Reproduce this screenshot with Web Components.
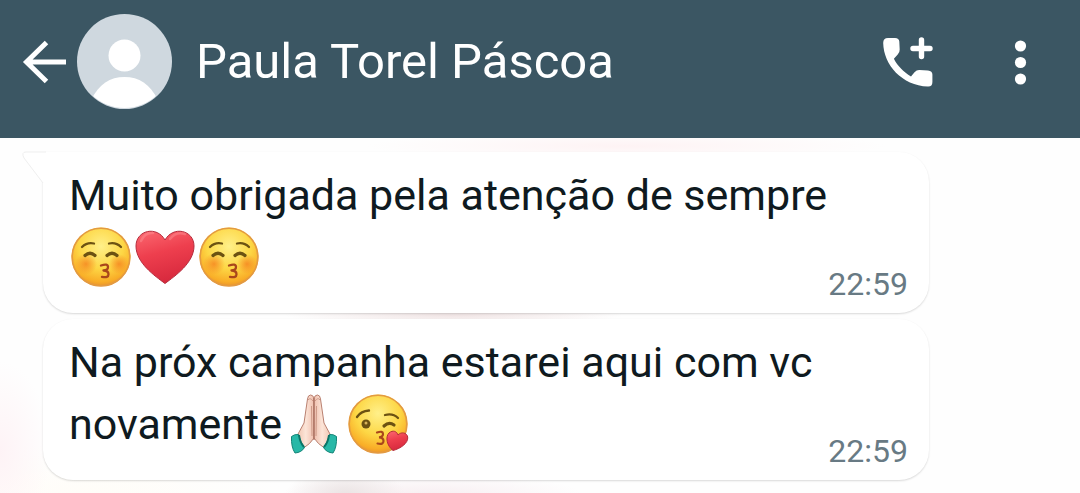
<!DOCTYPE html>
<html lang="pt-BR">
<head>
<meta charset="utf-8">
<meta name="viewport" content="width=device-width, initial-scale=1">
<title>Paula Torel Páscoa</title>
<style>
html, body { margin: 0; min-height: 100%; }
body { font-family: Roboto, "Noto Sans", sans-serif; background: #fff; }
</style>
</head>
<body>
<chat-screen>
  <chat-header slot="header">Paula Torel Páscoa</chat-header>
  <chat-message time="22:59" tail>Muito obrigada pela atenção de sempre <span style="white-space:nowrap"><chat-emoji name="smooch"></chat-emoji><chat-emoji name="heart"></chat-emoji><chat-emoji name="smooch"></chat-emoji></span></chat-message>
  <chat-message time="22:59">Na próx campanha estarei aqui com vc novamente<chat-emoji name="pray"></chat-emoji><chat-emoji name="wink"></chat-emoji></chat-message>
</chat-screen>
<script>
const attach = (el, html) => {
  const t = document.createElement('template');
  t.innerHTML = html;
  el.attachShadow({ mode: 'open' }).append(t.content.cloneNode(true));
};

customElements.define('chat-screen', class extends HTMLElement {
  constructor() {
    super();
    attach(this, `
      <style>
        :host { display: flex; flex-direction: column; min-height: 100vh; }
        main {
          flex: 1; display: flex; flex-direction: column; align-items: flex-start;
          gap: 6px; padding: 14px 43px;
          background:
            radial-gradient(ellipse 260px 14px at 58% 8px, #fef3f4, #fef3f400),
            radial-gradient(ellipse 170px 10px at 42% 177px, #f0e4e4, #f0e4e400),
            radial-gradient(ellipse 60px 26px at 32% 100%, #ebe4e4, #ebe4e400),
            radial-gradient(ellipse 150px 20px at 40% 100%, #f8eff2, #f8eff200),
            radial-gradient(ellipse 50px 90px at 0 88%, #fef3f6, #fef3f600),
            radial-gradient(ellipse 200px 50px at 8% 100%, #fffdf8, #fffdf800),
            #fefefe;
        }
      </style>
      <slot name="header"></slot>
      <main><slot></slot></main>`);
  }
});

customElements.define('chat-header', class extends HTMLElement {
  constructor() {
    super();
    attach(this, `
      <style>
        :host { display: block; background: #3b5663; color: #fff; }
        header { display: flex; align-items: center; padding: 14px 45px 29px 20px; }
        button { border: 0; padding: 0; background: none; color: inherit; display: flex; }
        svg { display: block; }
        .avatar { margin-left: 9px; }
        h1 { flex: 1; margin: 0 0 0 24px; font-size: 49px; line-height: 60px; font-weight: 400; white-space: nowrap; }
        .more { margin-left: 68px; }
      </style>
      <header>
        <button type="button" aria-label="Voltar">
          <svg width="48" height="48" viewBox="0 0 48 48" fill="none" stroke="currentColor" stroke-width="5"><path d="M46 24H7M26.500 4.500L6.500 24l20 19.500"/></svg>
        </button>
        <svg class="avatar" width="95" height="95" viewBox="0 0 95 95" role="img" aria-label="Foto do contato">
          <clipPath id="c"><circle cx="47.500" cy="47.500" r="46.500"/></clipPath>
          <circle cx="47.500" cy="47.500" r="47.500" fill="#cfd8df"/>
          <g fill="#fff" clip-path="url(#c)"><circle cx="47.500" cy="41.500" r="16"/><path d="M14 96V86C22 70 33 63 47.500 63S73 70 81 86v10z"/></g>
        </svg>
        <h1><slot></slot></h1>
        <button type="button" aria-label="Ligar">
          <svg width="50" height="50" viewBox="0 0 50 50" fill="currentColor">
            <path d="M5 1h7q4 0 4.300 3.500l.4 8q.1 3-2 5l-3.800 4.300C14.500 29 20.500 35 28 39.500l3.500-4.300q2.200-2.400 5-2.200l8.500.6q4.400.4 4.400 4V45q0 4.800-4.500 4.600C19 48.500.6 28 .2 6Q.2 1 5 1z"/>
            <path d="M38.500 3v16.500M30 11.500h17" stroke="currentColor" stroke-width="5.400" stroke-linecap="round"/>
          </svg>
        </button>
        <button type="button" class="more" aria-label="Mais opções">
          <svg width="34" height="46" viewBox="0 0 34 46" fill="currentColor"><circle cx="19.500" cy="7" r="5.600"/><circle cx="19.500" cy="23.500" r="5.600"/><circle cx="19.500" cy="40" r="5.600"/></svg>
        </button>
      </header>`);
  }
});

customElements.define('chat-message', class extends HTMLElement {
  constructor() {
    super();
    attach(this, `
      <style>
        :host { display: block; width: 100%; max-width: 886px; }
        article {
          position: relative; display: grid; box-sizing: border-box; padding: 12px 21px 13px 26px;
          border-radius: 30px; background: #fff; box-shadow: 0 1px 2px #00000026;
        }
        :host([tail]) article { border-top-left-radius: 0; }
        .tail { display: none; position: absolute; left: -21px; top: -1px; }
        :host([tail]) .tail { display: block; }
        p { grid-area: 1 / 1; margin: 0 0 12px; font-size: 43px; line-height: 62px; color: #0f1a20; }
        time { grid-area: 1 / 1; place-self: end; font-size: 32px; line-height: 32px; color: #687a84; }
      </style>
      <article>
        <svg class="tail" width="24" height="34" viewBox="0 0 24 34" aria-hidden="true"><path d="M24 1H4Q-1 1 2 7L21 32h3z" fill="#fff"/><path d="M24 1H4Q-1 1 2 7L21 32" fill="none" stroke="#efefef"/></svg>
        <p><slot></slot></p>
        <time></time>
      </article>`);
  }
  connectedCallback() {
    this.shadowRoot.querySelector('time').textContent = this.getAttribute('time');
  }
});

const face = `
  <radialGradient id="f" cx=".5" cy=".32" r=".68"><stop offset="0" stop-color="#fff08a"/><stop offset=".55" stop-color="#fdd745"/><stop offset=".88" stop-color="#f9ad27"/><stop offset="1" stop-color="#e8922f"/></radialGradient>
  <radialGradient id="b"><stop offset="0" stop-color="#f58220" stop-opacity=".8"/><stop offset="1" stop-color="#f58220" stop-opacity="0"/></radialGradient>
  <circle cx="32" cy="32" r="29.500" fill="url(#f)"/><circle cx="32" cy="32" r="28.800" fill="none" stroke="#e39a42" stroke-width="1.600"/>`;
const red = `<linearGradient id="h" x1=".3" y1="0" x2=".6" y2="1"><stop offset="0" stop-color="#f9626b"/><stop offset=".4" stop-color="#ee3f4e"/><stop offset="1" stop-color="#d5273c"/></linearGradient>`;
const halfPray = `<path d="M32 6Q31 3 28.500 3T25.500 7L22 31 15.500 43l6 13 6-4.500L32 46z" fill="url(#s)" stroke="#b98070"/>
    <path d="M26 8q2-3 5 1M29.500 14 30 44" fill="none" stroke="#ce9a88"/>
    <path d="M9.500 44.500q3-2.500 7-2 2 8 6 13-3 5-9.500 5.500Q9 55 9.500 44.500z" fill="#28b8a7" stroke="#148477"/><path d="M17 43q1 8 5 12" fill="none" stroke="#0b7467" stroke-width="2"/>`;
const emojis = {
  smooch: ['Rosto beijando com olhos fechados', face + `
    <circle cx="17" cy="39" r="11" fill="url(#b)"/><circle cx="50" cy="39" r="10" fill="url(#b)"/>
    <g fill="none" stroke="#6c5212" stroke-linecap="round"><path d="M13 22q5-5 12-3.500M40 18.500q7-1.500 12 3.500" stroke-width="2.300"/><path d="M16 30.500q5-4.500 10 0M38 30.500q5-4.500 10 0" stroke-width="3.200"/></g>
    <path d="M32 40.500q7-2.500 7 1.500 0 3.200-4.500 3.500 5 0 5 3.800 0 4-6.500 2.500" fill="none" stroke="#a9471b" stroke-width="2.300" stroke-linecap="round" stroke-linejoin="round"/>`],
  heart: ['Coração vermelho', red + `
    <path d="M32 58.500C22 51 3 38 3 21 3 5 24 .5 32 15 40 .5 61 5 61 21 61 38 42 51 32 58.500z" fill="url(#h)" stroke="#b52b3b"/>
    <path d="M8 16Q12 7 20 8M37 14Q43 6 52 9" fill="none" stroke="#ff9a9e" stroke-width="2.500" stroke-linecap="round" opacity=".4"/>`],
  pray: ['Mãos unidas', `
    <linearGradient id="s"><stop offset="0" stop-color="#f0c5b1"/><stop offset=".5" stop-color="#fce5d8"/><stop offset="1" stop-color="#efbfae"/></linearGradient>
    <g>${halfPray}</g><g transform="matrix(-1 0 0 1 64 0)">${halfPray}</g>
    <path d="M32 6v42" stroke="#a96f60" stroke-width="1.200"/>`],
  wink: ['Rosto mandando um beijo', face + red + `
    <g fill="none" stroke="#6c5212" stroke-linecap="round"><path d="M11 25q4-6 12-6.500M39 23q8-2 13 3" stroke-width="2.300"/><path d="M38 34q5-4.500 10-1" stroke-width="3.200"/></g>
    <circle cx="20" cy="32" r="4.500" fill="#6c5212"/><circle cx="20" cy="31" r="1.500" fill="#d8b35a"/>
    <path d="M31 40.500q6-2 6 1.500 0 3-4 3.300 4.500 0 4.500 3.700 0 4-6 2.500" fill="none" stroke="#a9471b" stroke-width="2.200" stroke-linecap="round"/>
    <path d="M47 58.500C41 54 39 45 43 41c4-3.500 8-1.500 9 2 3-3.500 9-2.500 9.700 2 .8 6-7 11.500-14.700 13.500z" fill="url(#h)" stroke="#b52b3b"/>`]
};

customElements.define('chat-emoji', class extends HTMLElement {
  connectedCallback() {
    if (this.shadowRoot) return;
    const [label, art] = emojis[this.getAttribute('name')];
    attach(this, `
      <style>
        :host { display: inline-block; width: 64px; height: 62px; vertical-align: top; }
        svg { display: block; }
      </style>
      <svg width="64" height="62" viewBox="0 1 64 62" role="img" aria-label="${label}">${art}</svg>`);
  }
});
</script>
</body>
</html>
